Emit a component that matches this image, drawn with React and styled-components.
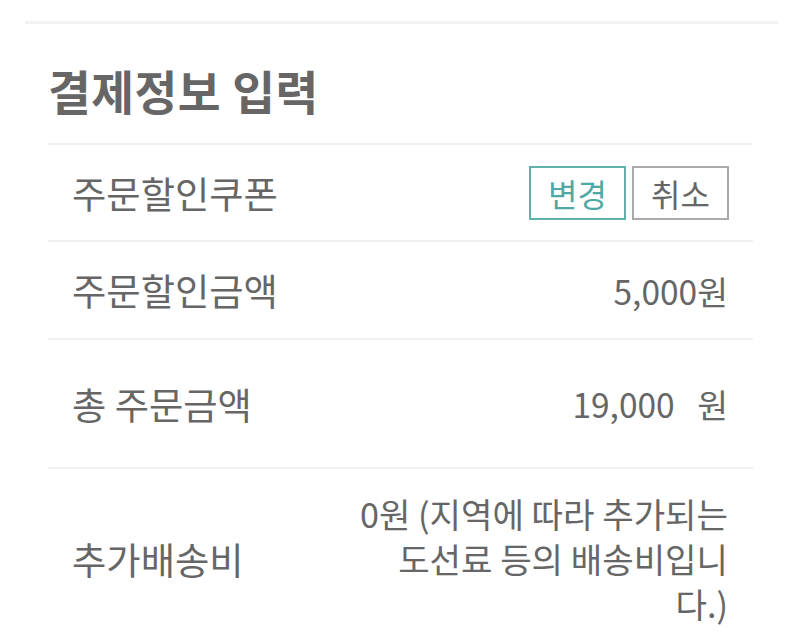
import styled, { createGlobalStyle } from "styled-components";

const GlobalStyle = createGlobalStyle`
  html, body {
    margin: 0;
    padding: 0;
    background: #ffffff;
  }
  body {
    font-family: "Noto Sans CJK KR", "Noto Sans", sans-serif;
    color: #666666;
  }
`;

const Page = styled.div`
  padding: 21px 22px 0 25px;
`;

const Card = styled.div`
  border-top: 3px solid #f2f2f2;
  padding: 0 25px 0 23px;
`;

const Heading = styled.h2`
  margin: 0;
  height: 119px;
  display: flex;
  align-items: center;
  padding-top: 12px;
  box-sizing: border-box;
  font-size: 46.5px;
  font-weight: 700;
  color: #666666;
  letter-spacing: 0.5px;
`;

const Row = styled.div`
  display: flex;
  align-items: center;
  justify-content: space-between;
  box-sizing: border-box;
  min-height: ${(p) => p.$height}px;
  padding: ${(p) => (p.$multi ? "22px 25px 24px 24px" : "0 25px 0 24px")};
  border-top: 2px solid #f0f0f0;
`;

const Label = styled.div`
  font-size: 37.3px;
  color: #666666;
  white-space: nowrap;
`;

const Value = styled.div`
  font-size: 33.5px;
  color: #666666;
  text-align: right;
  white-space: pre-wrap;
`;

const Note = styled.div`
  font-size: 34.2px;
  line-height: 45px;
  color: #666666;
  text-align: right;
  max-width: 374px;
`;

const Buttons = styled.div`
  display: flex;
  gap: 6px;
  margin-right: -1px;
`;

const Button = styled.button`
  width: 97px;
  height: 54px;
  padding: 0;
  background: #ffffff;
  font-family: inherit;
  font-size: 32px;
  color: ${(p) => (p.$primary ? "#4ea9a5" : "#666666")};
  border: 2px solid ${(p) => (p.$primary ? "#5fb1ad" : "#aaaaaa")};
  cursor: pointer;
`;

const App = () => {
  return (
    <>
      <GlobalStyle />
      <Page>
        <Card>
          <Heading>결제정보 입력</Heading>
          <Row $height={97}>
            <Label>주문할인쿠폰</Label>
            <Buttons>
              <Button $primary>변경</Button>
              <Button>취소</Button>
            </Buttons>
          </Row>
          <Row $height={98}>
            <Label>주문할인금액</Label>
            <Value>5,000원</Value>
          </Row>
          <Row $height={129}>
            <Label>총 주문금액</Label>
            <Value>{"19,000   원"}</Value>
          </Row>
          <Row $height={180} $multi>
            <Label>추가배송비</Label>
            <Note>0원 (지역에 따라 추가되는 도선료 등의 배송비입니다.)</Note>
          </Row>
        </Card>
      </Page>
    </>
  );
};

export default App;
